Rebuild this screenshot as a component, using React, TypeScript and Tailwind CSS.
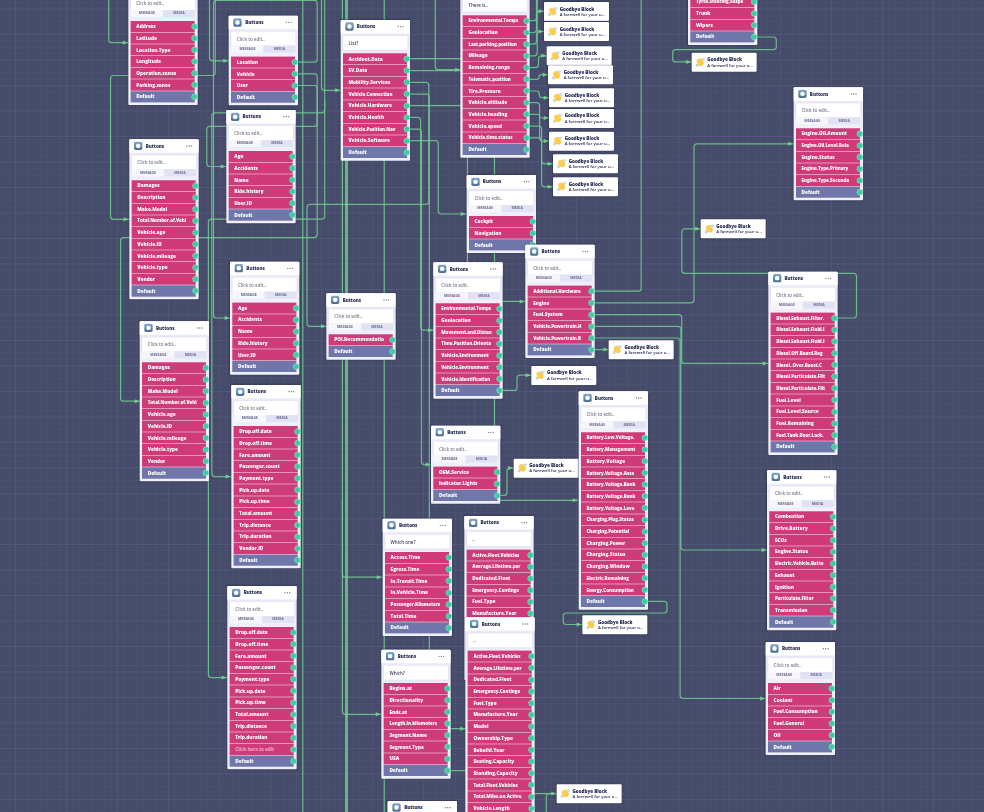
import React from "react";

type Pt = [number, number];

function roundedPath(pts: Pt[]): string {
  let d = `M${pts[0][0]} ${pts[0][1]}`;
  for (let i = 1; i < pts.length; i++) {
    const [x, y] = pts[i];
    if (i === pts.length - 1) {
      d += `L${x} ${y}`;
      break;
    }
    const [px, py] = pts[i - 1];
    const [nx, ny] = pts[i + 1];
    const a = Math.hypot(x - px, y - py);
    const b = Math.hypot(nx - x, ny - y);
    const r = Math.min(3, a / 2, b / 2);
    d += `L${x - ((x - px) / a) * r} ${y - ((y - py) / a) * r}`;
    d += `Q${x} ${y} ${x + ((nx - x) / b) * r} ${y + ((ny - y) / b) * r}`;
  }
  return d;
}

const arrows: Pt[][] = [
  [[108.7, -5], [108.7, 42.7], [128, 42.7]],
  [[215.3, -5], [215.3, 75.5], [110.5, 75.5], [110.5, 219.3], [129, 219.3]],
  [[209.5, -5], [209.5, 60.8], [228.5, 60.8]],
  [[294.5, 62.2], [317.2, 62.2], [317.2, 0.3], [213.5, 0.3], [213.5, 318], [230, 318]],
  [[294.5, 73.8], [317.2, 73.8], [317.2, 126.3], [206.8, 126.3], [206.8, 166.5], [226, 166.5]],
  [[294.5, 85.5], [317.2, 85.5], [317.2, 237.6], [120.6, 237.6], [120.6, 401.2], [140, 401.2]],
  [[321.5, -5], [321.5, 90.3], [340.5, 90.3]],
  [[324.7, -5], [324.7, 112.8], [211.8, 112.8], [211.8, 476.6], [231, 476.6]],
  [[324.7, 100], [324.7, 219.2], [208.4, 219.2], [208.4, 677.6], [227, 677.6]],
  [[342.4, -5], [342.4, 577.2], [382, 577.2]],
  [[342.4, 500], [342.4, 714.3], [381, 714.3]],
  [[435.2, -5], [435.2, 69.7], [460.5, 69.7]],
  [[407, 58.7], [467.4, 58.7], [467.4, 301.4], [525, 301.4]],
  [[407, 105.7], [494.5, 105.7], [494.5, 500.3], [578, 500.3]],
  [[407, 82.3], [428.8, 82.3], [428.8, 204.3], [307, 204.3], [307, 326.3], [326.3, 326.3]],
  [[407, 94.2], [429.3, 94.2], [429.3, 728.7], [465.5, 728.7]],
  [[407, 117.4], [420.6, 117.4], [420.6, 330.2], [433.3, 330.2]],
  [[407, 129.2], [421.4, 129.2], [421.4, 464.6], [431, 464.6]],
  [[407, 140.7], [438.3, 140.7], [438.3, 214], [466, 214]],
  [[527, 32.5], [536.5, 32.5], [536.5, 11.3], [544, 11.3]],
  [[527, 44.2], [536.5, 44.2], [536.5, 31.5], [544, 31.5]],
  [[527, 67.6], [538.5, 67.6], [538.5, 55.8], [546.7, 55.8]],
  [[527, 79.3], [539, 79.3], [539, 74.7], [548, 74.7]],
  [[527, 91], [539.3, 91], [539.3, 97.7], [549, 97.7]],
  [[527, 102.7], [539.6, 102.7], [539.6, 141], [549, 141]],
  [[527, 114.4], [539.6, 114.4], [539.6, 118], [549, 118]],
  [[527, 126.1], [541.6, 126.1], [541.6, 186.8], [553, 186.8]],
  [[527, 137.8], [541.6, 137.8], [541.6, 163.8], [553, 163.8]],
  [[591, 302.8], [694, 302.8], [694, 143.8], [793.5, 143.8]],
  [[591, 314.6], [681.7, 314.6], [681.7, 363.4], [768, 363.4]],
  [[591, 326.4], [680.9, 326.4], [680.9, 550], [767, 550]],
  [[591, 338], [680.1, 338], [680.1, 698.5], [765.5, 698.5]],
  [[591, 349.6], [608.8, 349.6]],
  [[834, 318], [856.5, 318], [856.5, 273.3], [681.8, 273.3], [681.8, 228.8], [700.5, 228.8]],
  [[754, 37], [776.3, 37], [776.3, 49.7], [672.7, 49.7], [672.7, 61.9], [691.5, 61.9]],
  [[499, 390.4], [517, 390.4], [517, 375.2], [531, 375.2]],
  [[497, 495.4], [507, 495.4], [507, 468], [513.5, 468]],
  [[645, 601.4], [667, 601.4], [667, 613], [563.2, 613], [563.2, 624.5], [582, 624.5]],
  [[448, 770.6], [500, 770.6], [500, 793.6], [556.5, 793.6]],
];

const plain: Pt[][] = [
  [[302.8, -5], [302.8, 820]],
  [[384.2, -5], [384.2, 820]],
  [[407, 70.6], [462, 70.6]],
  [[527, 20.7], [536.5, 20.7], [536.5, -5]],
  [[527, 55.8], [537.2, 55.8], [537.2, -5]],
  [[591, 291.2], [641.2, 291.2], [641.2, -5]],
  [[556, 793.6], [546.3, 793.6], [546.3, 820]],
];

interface NodeDef {
  x: number;
  y: number;
  text?: string;
  rows: string[];
}

const vehicleRows = ["Damages", "Description", "Make.Model", "Total.Number.of.Vehi", "Vehicle.age", "Vehicle.ID", "Vehicle.mileage", "Vehicle.type", "Vendor"];
const personRows = ["Age", "Accidents", "Name", "Ride.history", "User.ID"];
const tripRows = ["Drop.off.date", "Drop.off.time", "Fare.amount", "Passenger.count", "Payment.type", "Pick.up.date", "Pick.up.time", "Total.amount", "Trip.distance", "Trip.duration"];
const fleetRows = ["Active.Fleet.Vehicles", "Average.Lifetime.per", "Dedicated.Fleet", "Emergency.Continge", "Fuel.Type", "Manufacture.Year", "Model", "Ownership.Type", "Rebuild.Year", "Seating.Capacity"];

const nodes: NodeDef[] = [
  { x: 128.2, y: -20, rows: ["Address", "Latitude", "Location.Type", "Longitude", "Operation.zones", "Parking.zones"] },
  { x: 228.8, y: 15.7, rows: ["Location", "Vehicle", "User"] },
  { x: 226.2, y: 110, rows: personRows },
  { x: 129.3, y: 139.2, rows: vehicleRows },
  { x: 139.7, y: 321.2, rows: vehicleRows },
  { x: 230, y: 261.6, rows: personRows },
  { x: 231.2, y: 385, rows: [...tripRows, "Vendor.ID"] },
  { x: 227.3, y: 586, rows: [...tripRows, "Click here to edit"] },
  { x: 340.5, y: 19.9, text: "List?", rows: ["Accident.Data", "EV.Data", "Mobility.Services", "Vehicle.Connection", "Vehicle.Hardware", "Vehicle.Health", "Vehicle.Position.Nav", "Vehicle.Software"] },
  { x: 460.4, y: -18.3, text: "There is..", rows: ["Environmental.Temps", "Geolocation", "Last.parking.position", "Mileage", "Remaining.range", "Telematic.position", "Tire.Pressure", "Vehicle.altitude", "Vehicle.heading", "Vehicle.speed", "Vehicle.time.status"] },
  { x: 466.5, y: 175, rows: ["Cockpit", "Navigation"] },
  { x: 525.2, y: 244.8, rows: ["Additional.Hardware", "Engine", "Fuel.System", "Vehicle.Powertrain.H", "Vehicle.Powertrain.R"] },
  { x: 433.3, y: 262.2, rows: ["Environmental.Temps", "Geolocation", "Movement.and.Distan", "Time.Position.Orienta", "Vehicle.Environment", "Vehicle.Environment", "Vehicle.Identification"] },
  { x: 326.3, y: 293.2, rows: ["POI.Recommendatio"] },
  { x: 430.9, y: 425.6, rows: ["OEM.Service", "Indicator.Lights"] },
  { x: 578.5, y: 391.3, rows: ["Battery.Low.Voltage.", "Battery.Management", "Battery.Voltage", "Battery.Voltage.Asse", "Battery.Voltage.Bank", "Battery.Voltage.Bank", "Battery.Voltage.Leve", "Charging.Plug.Status", "Charging.Potential", "Charging.Power", "Charging.Status", "Charging.Window", "Electric.Remaining", "Energy.Consumption"] },
  { x: 382.6, y: 518.6, text: "Which one?", rows: ["Access.Time", "Egress.Time", "In.Transit.Time", "In.Vehicle.Time", "Passenger.Kilometers", "Total.Time"] },
  { x: 464.2, y: 516, text: "..", rows: fleetRows },
  { x: 381.4, y: 649.5, text: "Which?", rows: ["Begins.at", "Directionality", "Ends.at", "Length.in.kilometers", "Segment.Name", "Segment.Type", "USA"] },
  { x: 465.4, y: 617.3, text: "..", rows: [...fleetRows, "Standing.Capacity", "Total.Fleet.Vehicles", "Total.Miles.on.Active.", "Vehicle.Length", "Vehicle.Width"] },
  { x: 387.8, y: 800.9, text: "..", rows: ["Access.Time"] },
  { x: 687.9, y: -56.5, rows: ["Towing", "Tyres.Steering.Suspe", "Trunk", "Wipers"] },
  { x: 793.5, y: 87.2, rows: ["Engine.Oil.Amount", "Engine.Oil.Level.Rela", "Engine.Status", "Engine.Type.Primary", "Engine.Type.Seconda"] },
  { x: 768.2, y: 271.6, rows: ["Diesel.Exhaust.Filter.", "Diesel.Exhaust.Fluid.I", "Diesel.Exhaust.Fluid.I", "Diesel.Off.Board.Reg", "Diesel..Over.Boost.C", "Diesel.Particulate.Filt", "Diesel.Particulate.Filt", "Fuel.Level", "Fuel.Level.Source", "Fuel.Remaining", "Fuel.Tank.Door.Lock."] },
  { x: 766.9, y: 470.2, rows: ["Combustion", "Drive.Battery", "ECUs", "Engine.Status", "Electric.Vehicle.Batte", "Exhaust", "Ignition", "Particulate.Filter", "Transmission"] },
  { x: 765.6, y: 641.9, rows: ["Air", "Coolant", "Fuel.Consumption", "Fuel.General", "Oil"] },
];

const goodbyes: Pt[] = [
  [544, 2], [544, 22], [546.7, 46.4], [548, 65.4], [549, 88.3], [549, 108.9], [549, 131.6], [553, 154.3], [553, 177.3],
  [691.7, 52.7], [700.6, 219.4], [608.8, 340.3], [531.4, 365.9], [513.6, 458.6], [582.3, 615.2], [556.8, 784.2],
];

function Row({ label }: { label: string }) {
  const isDefault = label === "Default";
  const placeholder = label === "Click here to edit";
  const long = label.length > 17;
  return (
    <div className={`relative flex h-[33.1px] w-[192px] items-center ${isDefault ? "bg-[#6f76a9]" : "bg-[#cf3a78]"}`}>
      <span
        className={`ml-[17px] leading-[20px] font-extrabold whitespace-nowrap ${long ? "text-[13.5px] tracking-[-0.15px]" : "text-[14.2px]"} ${placeholder ? "text-[#e9a0c0]" : "text-white"}`}
      >
        {label}
      </span>
      <span className="absolute top-[7px] right-[-9px] size-[19px] rounded-full border-2 border-[#8fdcc8] bg-[#37cf9f]" />
    </div>
  );
}

function ButtonsNode({ node }: { node: NodeDef }) {
  return (
    <section
      className="absolute w-[208px] rounded-[3px] bg-[#efeff9] pb-2 shadow-[0_0_5px_rgba(25,30,70,0.4)]"
      style={{ left: node.x * 3, top: node.y * 3 }}
    >
      <header className="flex h-10 items-center rounded-t-[3px] bg-white pr-[19px] pl-[14px]">
        <span className="flex size-[25px] items-center justify-center rounded-[5px] bg-linear-to-b from-[#86a9c5] to-[#486e91]">
          <span className="size-[13px] rounded-[5px] bg-[#f5fbff]" />
        </span>
        <span className="ml-[10px] pt-px text-[13.6px] font-extrabold text-[#2a2f55]">Buttons</span>
        <span className="ml-auto flex gap-[3px]">
          <i className="size-[4px] rounded-full bg-[#6d7190]" />
          <i className="size-[4px] rounded-full bg-[#6d7190]" />
          <i className="size-[4px] rounded-full bg-[#6d7190]" />
        </span>
      </header>
      <div className="mx-2 mt-2 flex h-[42px] items-center bg-white pt-[3px] pl-4 text-[13.5px] shadow-[0_0_8px_rgba(120,120,190,0.22)]">
        {node.text ? (
          <span className="font-semibold text-[#3d4160]">{node.text}</span>
        ) : (
          <span className="font-semibold text-[#777a8a]">Click to edit..</span>
        )}
      </div>
      {node.text ? (
        <div className="h-[10.5px]" />
      ) : (
        <div className="mx-2 mb-3 grid h-[21px] grid-cols-2 text-center text-[10.5px] leading-[18px] font-bold text-[#666b94]">
          <span className="bg-[#f6f6fb]">MESSAGE</span>
          <span className="bg-[#e1e3f4]">MEDIA</span>
        </div>
      )}
      <div className="ml-[7px] flex w-[192px] flex-col gap-[2px] bg-[#ecc6dc]">
        {[...node.rows, "Default"].map((r, i) => (
          <Row key={i} label={r} />
        ))}
      </div>
    </section>
  );
}

function WaveHand() {
  return (
    <svg viewBox="1 1 25 25" className="size-[28px] shrink-0">
      <g transform="rotate(-32 13 13)" fill="#fccb4d">
        <rect x="6" y="4" width="4.4" height="13" rx="2.200" />
        <rect x="9.8" y="2" width="4.400" height="14" rx="2.200" />
        <rect x="13.6" y="3" width="4.400" height="14" rx="2.200" />
        <rect x="17" y="5.500" width="4.200" height="12" rx="2.100" />
        <path d="M6 10h15.200v7a7.500 7.500 0 0 1-13.500 4L2.500 15.500c-1.200-1.800 1-3.800 2.700-2.500L6 13.600z" />
      </g>
      <g fill="none" stroke="#8ebfe8" strokeWidth="2.200" strokeLinecap="round">
        <path d="M18 3q4 1 5 5M22 2q2 1 3 3M2.500 18q1 4 5 6M2 22q1 2 3 2.800" />
      </g>
    </svg>
  );
}

function GoodbyeBlock({ at }: { at: Pt }) {
  return (
    <article
      className="absolute flex h-[57px] w-[195px] items-center rounded-[3px] bg-white pl-[12px] text-[#252a50] shadow-[0_0_5px_rgba(25,30,70,0.4)]"
      style={{ left: at[0] * 3, top: at[1] * 3 }}
    >
      <WaveHand />
      <div className="ml-[7px] whitespace-nowrap">
        <div className="text-[13.6px] leading-[17px] font-extrabold">Goodbye Block</div>
        <div className="text-[12.8px] leading-[17px] font-semibold">A farewell for your u...</div>
      </div>
    </article>
  );
}

function Connections() {
  return (
    <svg className="absolute inset-0" width="984" height="812" viewBox="0 0 984 812" fill="none">
      <g stroke="#71c98f" strokeOpacity="0.88" strokeWidth="1.2">
        {[...arrows, ...plain].map((p, i) => (
          <path key={i} d={roundedPath(p)} />
        ))}
        <path d="M346.500 -5V820" strokeWidth="2.800" />
      </g>
      <g fill="#71d08e">
        {arrows.map((p, i) => {
          const [x, y] = p[p.length - 1];
          return <path key={i} d={`M${x - 0.3} ${y}l-5 -2v4z`} />;
        })}
      </g>
    </svg>
  );
}

export default function App() {
  return (
    <main className="relative h-[812px] w-[984px] overflow-hidden bg-[#454b69] font-['Open_Sans',sans-serif]">
      <div className="absolute inset-0 bg-[linear-gradient(to_right,rgba(140,150,200,0.07)_1px,transparent_1px),linear-gradient(to_bottom,rgba(140,150,200,0.07)_1px,transparent_1px)] bg-size-[6.375px_6.375px] bg-position-[2.4px_2px]" />
      <div className="absolute inset-0 bg-[linear-gradient(to_right,rgba(140,150,200,0.07)_1px,transparent_1px),linear-gradient(to_bottom,rgba(140,150,200,0.1)_1px,transparent_1px)] bg-size-[51px_25.5px] bg-position-[15px_8.5px]" />
      <Connections />
      <div className="absolute top-0 left-0 h-[2436px] w-[2952px] origin-top-left scale-[0.33333]">
        {goodbyes.map((g, i) => (
          <GoodbyeBlock key={i} at={g} />
        ))}
        {nodes.map((n, i) => (
          <ButtonsNode key={i} node={n} />
        ))}
      </div>
    </main>
  );
}
